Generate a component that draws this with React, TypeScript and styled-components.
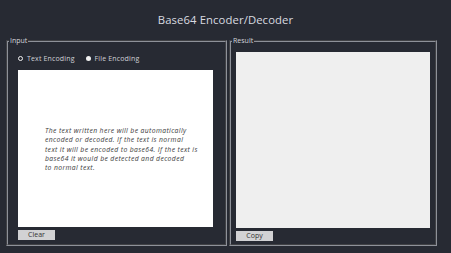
import styled, { createGlobalStyle } from 'styled-components';

const Global = createGlobalStyle`
  html, body {
    margin: 0;
    padding: 0;
    background: #272a33;
  }
  * {
    box-sizing: border-box;
  }
`;

const Page = styled.div`
  width: 451px;
  height: 253px;
  display: flex;
  flex-direction: column;
  font-family: 'Open Sans', 'DejaVu Sans', sans-serif;
  overflow: hidden;
`;

const Title = styled.h1`
  margin: 0;
  height: 37px;
  line-height: 39px;
  text-align: center;
  font-size: 11.3px;
  font-weight: 400;
  letter-spacing: 0.1px;
  color: #d9dae0;
`;

const Panels = styled.div`
  display: grid;
  grid-template-columns: 221px 208px;
  column-gap: 2px;
  padding-left: 6px;
`;

const Panel = styled.fieldset`
  margin: 0;
  padding: 0;
  min-width: 0;
  height: 209px;
  border: 2px groove #8e9199;
`;

const Legend = styled.legend`
  margin-left: 1px;
  padding: 0 1px;
  font-size: 7px;
  line-height: 8px;
  color: #d5d6dc;
`;

const Body = styled.div<{ $left: number; $top: number }>`
  display: flex;
  flex-direction: column;
  padding: ${(p) => p.$top}px 0 0 ${(p) => p.$left}px;
`;

const RadioRow = styled.div`
  display: flex;
  align-items: center;
  gap: 11px;
  height: 12px;
  margin-top: 1px;
  margin-bottom: 6px;
`;

const RadioLabel = styled.label`
  display: flex;
  align-items: center;
  gap: 4px;
  font-size: 7px;
  letter-spacing: 0.15px;
  color: #cfd0d6;
  cursor: pointer;
`;

const Dot = styled.span<{ $checked: boolean }>`
  width: 5px;
  height: 5px;
  border-radius: 50%;
  background: ${(p) => (p.$checked ? '#272a33' : '#f2f2f2')};
  border: ${(p) => (p.$checked ? '1.5px solid #f2f2f2' : 'none')};
`;

const TextBox = styled.textarea<{ $w: number; $h: number; $bg: string }>`
  display: block;
  width: ${(p) => p.$w}px;
  height: ${(p) => p.$h}px;
  margin: 0;
  padding: 56px 4px 0 27px;
  border: none;
  outline: none;
  resize: none;
  background: ${(p) => p.$bg};
  font-family: 'Open Sans', 'DejaVu Sans', sans-serif;
  font-size: 6.8px;
  line-height: 9.3px;
  letter-spacing: 0.38px;
  color: #333;
  &::placeholder {
    font-style: italic;
    color: #3a3a3a;
  }
`;

const Button = styled.button`
  width: 37px;
  height: 10px;
  margin-top: 3px;
  padding: 0;
  border: none;
  background: #d2d2d4;
  font-family: 'Open Sans', 'DejaVu Sans', sans-serif;
  font-size: 7px;
  line-height: 10px;
  color: #333;
  cursor: pointer;
`;

const hint = [
  'The text written here will be automatically',
  'encoded or decoded. If the text is normal',
  'text it will be encoded to base64. If the text is',
  'base64 it would be detected and decoded',
  'to normal text.',
].join('\n');

export default function App() {
  return (
    <>
      <Global />
      <Page>
        <Title>Base64 Encoder/Decoder</Title>
        <Panels>
          <Panel>
            <Legend>Input</Legend>
            <Body $left={10} $top={6}>
              <RadioRow>
                <RadioLabel>
                  <Dot $checked />
                  Text Encoding
                </RadioLabel>
                <RadioLabel>
                  <Dot $checked={false} />
                  File Encoding
                </RadioLabel>
              </RadioRow>
              <TextBox $w={195} $h={157} $bg="#ffffff" placeholder={hint} />
              <Button>Clear</Button>
            </Body>
          </Panel>
          <Panel>
            <Legend>Result</Legend>
            <Body $left={5} $top={7}>
              <TextBox $w={194} $h={176} $bg="#efefef" readOnly />
              <Button>Copy</Button>
            </Body>
          </Panel>
        </Panels>
      </Page>
    </>
  );
}
